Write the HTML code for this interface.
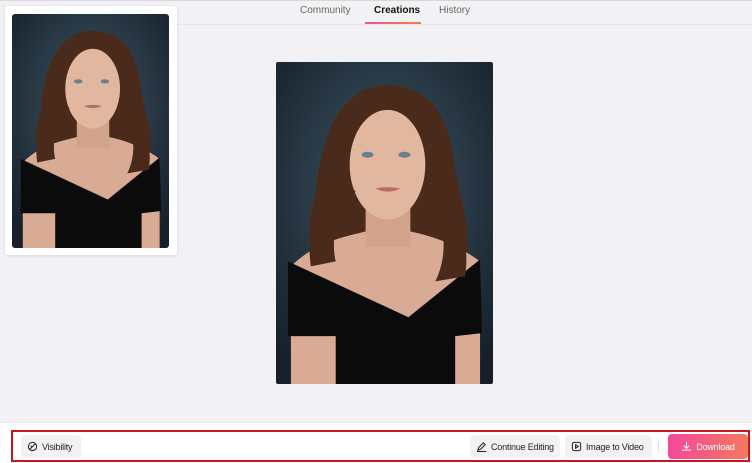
<!DOCTYPE html>
<html><head><meta charset="utf-8"><style>
*{margin:0;padding:0;box-sizing:border-box}
body{width:752px;height:462px;background:#f2f2f5;font-family:"Liberation Sans",sans-serif;position:relative;overflow:hidden;border-top:1px solid #d8d8dc}
.tabs{position:absolute;top:0;left:177px;right:0;height:24px;border-bottom:1px solid #e4e4e8}
.tab{position:absolute;top:4px;font-size:10px;color:#666}
.card{position:absolute;left:5px;top:5px;width:172px;height:249px;background:#fff;border-radius:3px;box-shadow:0 1px 3px rgba(0,0,0,.1)}
.bar{position:absolute;left:0;top:421px;width:752px;height:41px;background:#fff;border-top:1px solid #e6e6ea}
.red{position:absolute;left:11px;top:429px;width:739px;height:32px;border:2px solid #c8161d}
.btn{position:absolute;top:434px;height:23px;background:#f2f2f4;border-radius:4px;font-size:9px;color:#222;display:flex;align-items:center;gap:4px;padding:0 6px;white-space:nowrap;letter-spacing:-0.2px}
svg.i{width:11px;height:11px;flex-shrink:0}
</style></head><body>
<div class="tabs">
<div class="tab" style="left:123px">Community</div>
<div class="tab" style="left:197px;color:#111;font-weight:bold">Creations</div>
<div class="tab" style="left:262px">History</div>
<div style="position:absolute;left:188px;top:21px;width:56px;height:2px;background:linear-gradient(90deg,#f04fa8,#f2803a)"></div>
</div>
<svg width="0" height="0" style="position:absolute"><defs>
<radialGradient id="bg" cx="50%" cy="40%" r="70%"><stop offset="0" stop-color="#3f5565"/><stop offset="1" stop-color="#15202a"/></radialGradient>
<g id="p">
<rect width="218" height="323" fill="url(#bg)"/>
<path d="M112 23 C60 25 45 80 40 130 C30 170 30 190 45 215 L185 215 C200 190 190 150 180 110 C175 60 160 25 112 23Z" fill="#4a2b1b"/>
<path d="M15 205 C40 180 70 175 90 170 L135 170 C160 175 185 185 205 200 L205 323 L15 323Z" fill="#d9ab94"/>
<rect x="90" y="140" width="45" height="45" fill="#d3a28b"/>
<ellipse cx="112" cy="103" rx="38" ry="55" fill="#e2b7a0"/>
<path d="M75 60 C85 40 140 40 150 65 L150 55 C140 25 85 25 75 55Z" fill="#4a2b1b"/>
<path d="M12 200 L133 256 L205 198 L207 272 L180 275 L180 323 L60 323 L60 275 L12 275Z" fill="#0b0b0c"/>
<path d="M145 130 C170 150 175 190 160 220 L190 215 C195 180 185 140 160 120Z" fill="#4a2b1b"/>
<path d="M80 130 C60 150 55 180 60 200 L35 205 C30 170 40 140 65 115Z" fill="#4a2b1b"/>
<ellipse cx="92" cy="93" rx="6" ry="3" fill="#6b7f8a"/><ellipse cx="129" cy="93" rx="6" ry="3" fill="#6b7f8a"/>
<path d="M100 127 Q112 133 125 127 Q112 124 100 127Z" fill="#b56e64"/>
</g></defs></svg>
<div class="card"><svg style="position:absolute;left:7px;top:8px;border-radius:3px" width="157" height="234" viewBox="0 0 218 323" preserveAspectRatio="none"><use href="#p"/></svg></div>
<svg style="position:absolute;left:276px;top:61px;border-radius:2px" width="217" height="322" viewBox="0 0 218 323" preserveAspectRatio="none"><use href="#p"/></svg>
<div class="bar"></div>
<div class="red"></div>
<div class="btn" style="left:21px;width:60px"><svg class="i" viewBox="0 0 12 12" fill="none" stroke="#222" stroke-width="1.1"><circle cx="6" cy="6" r="4.5"/><path d="M3 9 9 3M4 5 6 7"/></svg>Visibility</div>
<div class="btn" style="left:470px;width:90px"><svg class="i" viewBox="0 0 12 12" fill="none" stroke="#222" stroke-width="1.1"><path d="M2 10 3 7 8 2 10 4 5 9Z M1 11.5H11"/></svg>Continue Editing</div>
<div class="btn" style="left:565px;width:87px"><svg class="i" viewBox="0 0 12 12" fill="none" stroke="#222" stroke-width="1.1"><rect x="1.5" y="1.5" width="9" height="9" rx="2"/><path d="M5 4 8 6 5 8Z"/></svg>Image to Video</div>
<div style="position:absolute;left:658px;top:441px;width:1px;height:9px;background:#ddd"></div>
<div class="btn" style="left:668px;width:80px;height:25px;top:433px;background:linear-gradient(90deg,#f5479c,#f47860);color:#fff;justify-content:center"><svg class="i" viewBox="0 0 12 12" fill="none" stroke="#fff" stroke-width="1.1"><path d="M6 1V8M3 5 6 8 9 5M1 10H11"/></svg>Download</div>
</body></html>
